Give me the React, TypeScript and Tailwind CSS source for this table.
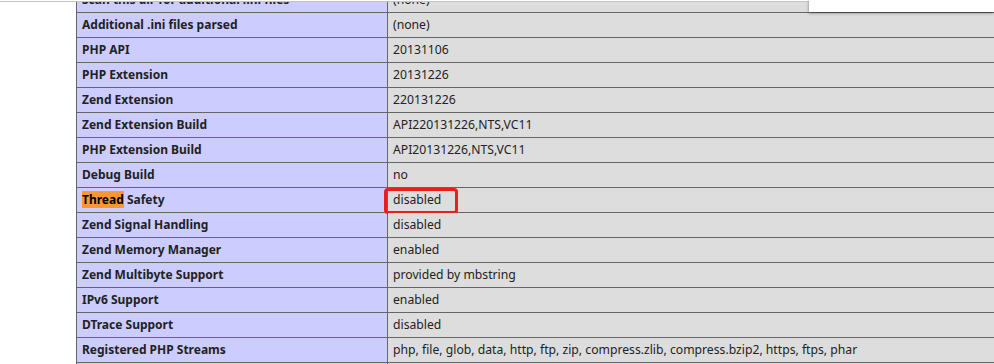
const rows: [string, string][] = [
  ["Scan this dir for additional .ini files", "(none)"],
  ["Additional .ini files parsed", "(none)"],
  ["PHP API", "20131106"],
  ["PHP Extension", "20131226"],
  ["Zend Extension", "220131226"],
  ["Zend Extension Build", "API220131226,NTS,VC11"],
  ["PHP Extension Build", "API20131226,NTS,VC11"],
  ["Debug Build", "no"],
  ["Thread Safety", "disabled"],
  ["Zend Signal Handling", "disabled"],
  ["Zend Memory Manager", "enabled"],
  ["Zend Multibyte Support", "provided by mbstring"],
  ["IPv6 Support", "enabled"],
  ["DTrace Support", "disabled"],
  [
    "Registered PHP Streams",
    "php, file, glob, data, http, ftp, zip, compress.zlib, compress.bzip2, https, ftps, phar",
  ],
  ["Registered Stream Socket Transports", "tcp, udp"],
];

function KeyText({ label }: { label: string }) {
  // browser find-in-page highlight on "Thread"
  if (label === "Thread Safety") {
    return (
      <>
        <span className="bg-[#ff9632] text-black">Thread</span> Safety
      </>
    );
  }
  return <>{label}</>;
}

export default function App() {
  return (
    <main
      className="relative h-[364px] w-[994px] overflow-hidden bg-white text-[#222]"
      style={{ fontFamily: '"Noto Sans", "Liberation Sans", sans-serif' }}
    >
      <div className="h-px bg-white" />
      <div className="h-px bg-[#c4c4c4]" />

      <div className="h-[362px] overflow-hidden">
        <table className="-mt-[15px] ml-[76px] w-[934px] table-fixed border-collapse">
          <tbody>
            {rows.map(([key, value]) => (
              <tr key={key}>
                <td className="w-[311px] border border-[#666] bg-[#ccccff] px-[5px] py-[4px] align-baseline text-[12px] font-bold leading-4 whitespace-nowrap">
                  <KeyText label={key} />
                </td>
                <td className="relative border border-[#666] bg-[#dddddd] px-[5px] py-[4px] align-baseline text-[12.2px] leading-4 whitespace-nowrap">
                  {value}
                  {key === "Thread Safety" && (
                    <span className="absolute left-[-4px] top-0 h-[26px] w-[74px] rounded-[4px] border-[3px] border-[#ee1c1c]" />
                  )}
                </td>
              </tr>
            ))}
          </tbody>
        </table>
      </div>

      {/* dropdown panel sticking out of the browser toolbar */}
      <div className="absolute left-[809px] top-0 h-[12px] w-[185px] bg-white shadow-[0_1px_3px_rgba(0,0,0,0.45)]" />
    </main>
  );
}
